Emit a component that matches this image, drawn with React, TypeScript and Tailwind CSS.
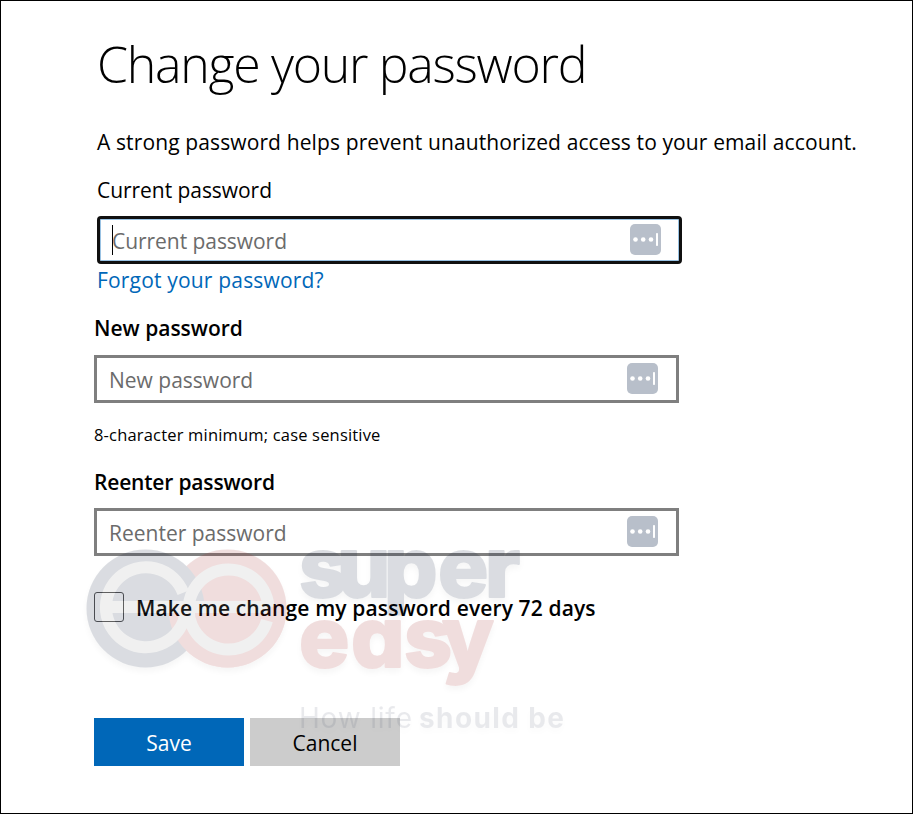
function KeyBadge() {
  return (
    <svg className="-mt-px block h-[31px] w-[31px] shrink-0" viewBox="0 0 31 31" aria-hidden="true">
      <rect width="31" height="31" rx="5" fill="#b8bfca" />
      <g fill="#fff">
        <circle cx="5.5" cy="15.5" r="2.3" />
        <circle cx="13.2" cy="15.5" r="2.3" />
        <circle cx="21" cy="15.5" r="2.3" />
        <rect x="26" y="9" width="2" height="13" rx="0.8" />
      </g>
    </svg>
  );
}

function Field({ text }: { text: string }) {
  return (
    <div className="flex h-12 w-[585px] items-center justify-between border-[3px] border-[#7f7f7f] pr-[18px] pl-3">
      <span className="pt-0.5 text-[21px] leading-[30px] text-[#6b6b6b]">{text}</span>
      <KeyBadge />
    </div>
  );
}

function Watermark() {
  return (
    <svg
      className="pointer-events-none absolute top-[539px] left-[79px] h-[210px] w-[500px]"
      viewBox="80 540 500 210"
      aria-hidden="true"
    >
      <defs>
        <filter id="shade" x="-10%" y="-10%" width="120%" height="130%">
          <feDropShadow dx="0" dy="4" stdDeviation="3" floodColor="#000" floodOpacity="0.25" />
        </filter>
        <clipPath id="lower">
          <rect x="160" y="608" width="140" height="70" />
        </clipPath>
      </defs>
      <g opacity="0.15" filter="url(#shade)" transform="translate(1 0)">
        <circle cx="226.500" cy="608.4" r="59" fill="#a02424" />
        <circle cx="144.500" cy="608.4" r="59" fill="#0f1e3c" />
        <circle cx="226.500" cy="608.4" r="59" fill="#a02424" clipPath="url(#lower)" />
        <g fill="none" stroke="#a2a2a2" strokeWidth="12">
          <path d="M182.200 592.700 A40 40 0 1 0 184.500 613 V607 H105" />
          <path d="M268 607 H188.500 M266 620.700 A40 40 0 1 1 267.500 607" />
        </g>
      </g>
      <g
        opacity="0.15"
        filter="url(#shade)"
        fontFamily="Inter, sans-serif"
        fontWeight="800"
        fontSize="84"
        strokeWidth="2"
        strokeLinejoin="round"
        style={{ fontFeatureSettings: '"cv11" 1, "ss03" 1' }}
      >
        <text x="299 337 384 438 485" y="597" fill="#0f1e3c" stroke="#0f1e3c">super</text>
        <text x="299 351 404 442" y="667" fill="#a02424" stroke="#a02424">easy</text>
      </g>
      <g opacity="0.09" filter="url(#shade)" fontFamily="Inter, sans-serif" fontSize="28" fill="#0f1e3c">
        <text x="299" y="728" textLength="113" fontWeight="400">How life</text>
        <text x="419" y="728" textLength="145" fontWeight="700">should be</text>
      </g>
    </svg>
  );
}

export default function App() {
  return (
    <div className="relative h-[814px] w-[913px] overflow-hidden border border-black bg-white pt-[28px] pl-[93px] font-['Open_Sans','Noto_Sans',sans-serif] text-[21px] leading-[30px] text-black">
      <div className="pl-[3px] whitespace-nowrap">
        <h1 className="h-[98px] text-[50px] leading-[70px] font-light tracking-[-1.28px]">Change your password</h1>
        <p className="h-12 tracking-[0.12px]">A strong password helps prevent unauthorized access to your email account.</p>
        <label className="block h-[41px] tracking-[-0.05px]">Current password</label>
        <div className="flex h-12 w-[585px] items-center justify-between rounded-[4px] border-[3px] border-[#101010] pr-[18px] pl-3 shadow-[inset_0_0_0_1px_#0067b866]">
          <span className="flex items-center tracking-[-0.05px] text-[#6b6b6b]">
            <span className="-mr-px h-[30px] w-px bg-black" />
            <span className="pt-0.5">Current password</span>
          </span>
          <KeyBadge />
        </div>
        <a className="block h-12 pt-px tracking-[0.18px] text-[#0067b8]">Forgot your password?</a>
      </div>
      <label className="block h-[43px] pt-px font-semibold">New password</label>
      <Field text="New password" />
      <p className="mt-[20px] h-[24px] text-[16.5px] leading-6 tracking-[0.18px]">8-character minimum; case sensitive</p>
      <label className="mt-[19px] block h-[42px] pt-px font-semibold tracking-[-0.18px]">Reenter password</label>
      <Field text="Reenter password" />
      <label className="mt-[36px] flex h-[30px] items-center gap-3 font-semibold">
        <span className="size-[30px] rounded-[3px] border border-[#555]" />
        <span className="pt-0.5 tracking-[0.13px]">Make me change my password every 72 days</span>
      </label>
      <div className="mt-24 flex gap-1.5">
        <button className="h-12 w-[150px] bg-[#0067b8] pt-0.5 text-white">Save</button>
        <button className="h-12 w-[150px] bg-[#ccc] pt-0.5">Cancel</button>
      </div>
      <Watermark />
    </div>
  );
}
